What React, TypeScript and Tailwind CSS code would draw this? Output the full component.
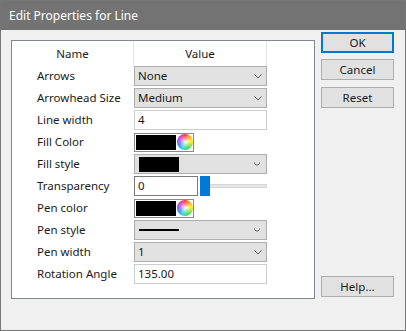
import React from "react"

function Chevron() {
  return (
    <svg width="8" height="5" viewBox="0 0 8 5" className="shrink-0">
      <path d="M0.5 0.5 L4 4 L7.5 0.5" fill="none" stroke="#5a5a5a" strokeWidth="1" />
    </svg>
  )
}

function SmallChevron() {
  return (
    <svg width="6" height="4" viewBox="0 0 6 4" className="shrink-0">
      <path d="M0.5 0.5 L0.5 1.5 L2 3 L4 3 L5.5 1.5 L5.5 0.5" fill="none" stroke="#6a6a6a" strokeWidth="1" />
    </svg>
  )
}

function Combo({ value }: { value: string }) {
  return (
    <div className="h-[20px] w-full flex items-center justify-between bg-[#e1e1e1] border border-[#adadad] pl-[3px] pr-[4px]">
      <span>{value}</span>
      <Chevron />
    </div>
  )
}

function OwnerCombo({ children }: { children: React.ReactNode }) {
  return (
    <div className="h-[20px] w-full flex items-center justify-between bg-[#e1e1e1] border border-[#adadad] pl-[4px] pr-[6px]">
      {children}
      <SmallChevron />
    </div>
  )
}

function TextBox({ value }: { value: string }) {
  return (
    <div className="h-[20px] w-full flex items-center bg-white border border-[#cccccc] pl-[3px]">
      {value}
    </div>
  )
}

function ColorPick() {
  return (
    <div className="h-[19px] w-[60px] flex items-center border border-[#8a8a8a] bg-white pl-[1px] gap-[1px]">
      <div className="w-[40px] h-[15px] bg-black" />
      <div className="relative w-[16px] h-[16px] rounded-full bg-[conic-gradient(#ff2020,#ff9a00,#ffee00,#80e020,#20d060,#20d0d0,#2080ff,#8040ff,#e020c0,#ff2020)]">
        <div className="absolute inset-0 rounded-full bg-[radial-gradient(circle,rgba(255,255,255,0.95)_0%,rgba(255,255,255,0.3)_45%,rgba(255,255,255,0)_75%)]" />
      </div>
    </div>
  )
}

function Row({ label, children }: { label: string; children: React.ReactNode }) {
  return (
    <div className="h-[20px] mb-[2px] flex">
      <div className="w-[122px] pl-[25px] flex items-center">{label}</div>
      <div className="w-[133px] flex items-center">{children}</div>
    </div>
  )
}

function Btn({ label, primary }: { label: string; primary?: boolean }) {
  return (
    <div
      className={
        primary
          ? "h-[21px] w-[73px] flex items-center justify-center bg-[#e1e1e1] border-2 border-[#0078d7]"
          : "h-[21px] w-[73px] flex items-center justify-center bg-[#e1e1e1] border border-[#adadad]"
      }
    >
      {label}
    </div>
  )
}

export default function App() {
  return (
    <div className="w-[406px] h-[331px] flex flex-col border border-[#767676] bg-[#f0f0f0] font-['Noto_Sans',sans-serif] text-[11.5px] text-[#1a1a1a] leading-none">
      <div className="h-[29px] shrink-0 bg-[#737373] text-white pl-[8px] flex items-center text-[12px]">
        Edit Properties for Line
      </div>
      <div className="flex-1 flex pb-[31px]">
        <div className="ml-[10px] mt-[10px] w-[304px] h-[259px] border border-[#828790] bg-white flex flex-col">
          <div className="h-[25px] flex">
            <div className="w-[121px] flex items-center justify-center">Name</div>
            <div className="w-[134px] flex items-center justify-center border-l border-r border-[#e5e5e5]">Value</div>
          </div>
          <Row label="Arrows"><Combo value="None" /></Row>
          <Row label="Arrowhead Size"><Combo value="Medium" /></Row>
          <Row label="Line width"><TextBox value="4" /></Row>
          <Row label="Fill Color"><ColorPick /></Row>
          <Row label="Fill style">
            <OwnerCombo><div className="w-[40px] h-[15px] bg-black" /></OwnerCombo>
          </Row>
          <Row label="Transparency">
            <div className="flex items-center w-full h-[20px]">
              <div className="w-[64px] h-[20px] flex items-center bg-white border border-[#7a7a7a] pl-[3px]">0</div>
              <div className="ml-[2px] w-[10px] h-[20px] bg-[#0078d7]" />
              <div className="flex-1 h-[4px] bg-[#e7e7e7] border border-[#d6d6d6]" />
            </div>
          </Row>
          <Row label="Pen color"><ColorPick /></Row>
          <Row label="Pen style">
            <OwnerCombo><div className="w-[40px] h-[2px] bg-black" /></OwnerCombo>
          </Row>
          <Row label="Pen width"><Combo value="1" /></Row>
          <Row label="Rotation Angle"><TextBox value="135.00" /></Row>
        </div>
        <div className="ml-[6px] pt-[2px] pb-[2px] flex flex-col">
          <Btn label="OK" primary />
          <div className="h-[6px]" />
          <Btn label="Cancel" />
          <div className="h-[7px]" />
          <Btn label="Reset" />
          <div className="mt-auto">
            <Btn label="Help..." />
          </div>
        </div>
      </div>
    </div>
  )
}
